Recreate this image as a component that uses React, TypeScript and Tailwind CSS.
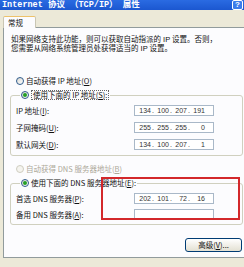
import type { ReactNode } from "react";

function Radio({ on, off }: { on?: boolean; off?: boolean }) {
  return (
    <span
      className={`flex h-[8px] w-[8px] shrink-0 items-center justify-center rounded-full border ${
        off ? "border-[#CFCDC0] bg-[#F5F4EF]" : "border-[#2F5B8C] bg-gradient-to-br from-[#DAD9D2] to-white"
      }`}
    >
      {on && <span className="h-[4px] w-[4px] rounded-full bg-[#25A025]" />}
    </span>
  );
}

function IpField({ v }: { v?: string[] }) {
  return (
    <div className="flex h-[11px] w-[80px] shrink-0 items-center border border-[#A9B8C8] bg-white pl-[1px] font-['Liberation_Sans',sans-serif] text-[7px] leading-none text-[#333]">
      {v &&
        v.map((n, i) => (
          <div key={i} className={`flex ${i === 0 ? "w-[15px]" : "w-[18px]"}`}>
            {i > 0 && <span className="w-[4px] text-center">.</span>}
            <span className="flex-1 text-right">{n}</span>
          </div>
        ))}
    </div>
  );
}

function Row({ label, v }: { label: ReactNode; v?: string[] }) {
  return (
    <div className="flex h-[11px] items-center">
      <div className="w-[118px] shrink-0">{label}</div>
      <IpField v={v} />
    </div>
  );
}

const k = (c: string) => <span className="underline">{c}</span>;

export default function App() {
  return (
    <div className="relative flex h-[267px] w-[244px] flex-col overflow-hidden bg-[#ECE9D8] font-['Noto_Sans_CJK_SC',sans-serif] text-[7.5px] leading-[10px] text-[#111]">
      {/* title bar */}
      <div className="flex h-[10px] w-[256px] shrink-0 items-center bg-gradient-to-b from-[#2A6BE2] to-[#1B57D0] pl-[2px]">
        <div className="flex-1 font-['Liberation_Mono','Noto_Sans_CJK_SC',monospace] text-[8.5px] font-bold leading-[10px] text-white">
          Internet 协议 （TCP/IP） 属性
        </div>
        <div className="mr-[2px] flex h-[10px] w-[11px] items-center justify-center rounded-[2px] border border-white bg-[#3C7CEB] font-['Liberation_Sans',sans-serif] text-[8px] font-bold text-white">
          ?
        </div>
        <div className="h-[10px] w-[11px] rounded-[2px] border border-white bg-[#D8552F]" />
      </div>

      {/* tab strip */}
      <div className="flex pl-[3px] pt-[6px]">
        <div className="relative z-10 -mb-px flex h-[12px] w-[33px] items-center rounded-t-[2px] border border-b-0 border-[#C9C6B4] border-t-[#EDC26A] bg-[#FCFCFE] pl-[4px]">
          常规
        </div>
      </div>

      {/* panel */}
      <div className="ml-[3px] flex h-[231px] w-[260px] shrink-0 flex-col border border-[#919B9C] bg-[#FCFCFE]">
        <div className="pl-[7px] pt-[7px] font-['Liberation_Sans','Noto_Sans_CJK_SC',sans-serif] leading-[9px]">
          <div>如果网络支持此功能，则可以获取自动指派的 IP 设置。否则，</div>
          <div>您需要从网络系统管理员处获得适当的 IP 设置。</div>
        </div>

        <div className="ml-[12px] mt-[23px] flex h-[10px] items-center gap-[2px]">
          <Radio />
          <span>自动获得 IP 地址({k("O")})</span>
        </div>

        <fieldset className="ml-[6px] mt-[4px] w-[233px] rounded-[3px] border border-[#D0D0BF] pb-[5px] pl-[5px] pt-[5px]">
          <legend className="ml-[4px] px-[1px]">
            <div className="flex h-[10px] items-center gap-[2px]">
              <Radio on />
              <span className="border border-dotted border-[#666] px-[1px] leading-[8px]">
                使用下面的 IP 地址({k("S")}):
              </span>
            </div>
          </legend>
          <div className="flex flex-col gap-[6px]">
            <Row label={<>IP 地址({k("I")}):</>} v={["134", "100", "207", "191"]} />
            <Row label={<>子网掩码({k("U")}):</>} v={["255", "255", "255", "0"]} />
            <Row label={<>默认网关({k("D")}):</>} v={["134", "100", "207", "1"]} />
          </div>
        </fieldset>

        <div className="ml-[12px] mt-[8px] flex h-[10px] items-center gap-[2px] text-[#ACA899]">
          <Radio off />
          <span>自动获得 DNS 服务器地址({k("B")})</span>
        </div>

        <fieldset className="ml-[6px] mt-[4px] w-[233px] rounded-[3px] border border-[#D0D0BF] pb-[4px] pl-[5px] pt-[5px]">
          <legend className="ml-[4px] px-[1px]">
            <div className="flex h-[10px] items-center gap-[2px]">
              <Radio on />
              <span>使用下面的 DNS 服务器地址({k("E")}):</span>
            </div>
          </legend>
          <div className="flex flex-col gap-[5px]">
            <Row label={<>首选 DNS 服务器({k("P")}):</>} v={["202", "101", "72", "16"]} />
            <Row label={<>备用 DNS 服务器({k("A")}):</>} />
          </div>
        </fieldset>

        <button
          type="button"
          className="ml-[181px] mt-[13px] flex h-[14px] w-[57px] items-center justify-center rounded-[3px] border border-[#003C74] bg-gradient-to-b from-white to-[#E3E0D2]"
        >
          高级({k("V")})...
        </button>
      </div>

      {/* annotation */}
      <div className="absolute left-[101px] top-[177px] h-[43px] w-[139px] border-2 border-[#D3282B]" />
    </div>
  );
}
